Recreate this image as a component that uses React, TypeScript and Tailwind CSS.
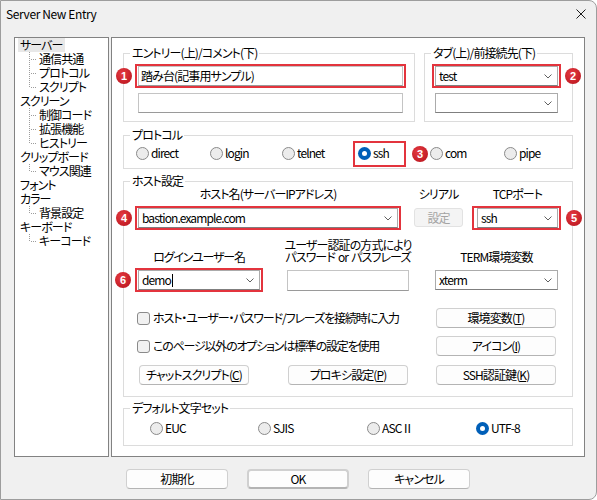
import React from "react";

type TreeNode = { label: string; selected?: boolean; children: string[] };

const tree: TreeNode[] = [
  { label: "サーバー", selected: true, children: ["通信共通", "プロトコル", "スクリプト"] },
  { label: "スクリーン", children: ["制御コード", "拡張機能", "ヒストリー"] },
  { label: "クリップボード", children: ["マウス関連"] },
  { label: "フォント", children: [] },
  { label: "カラー", children: ["背景設定"] },
  { label: "キーボード", children: ["キーコード"] },
];

function Badge({ n, className }: { n: number; className: string }) {
  return (
    <span
      className={`absolute z-10 w-[16px] h-[16px] rounded-full bg-[radial-gradient(circle_at_40%_35%,#e53a41,#b5121b)] text-white text-[11px] leading-[16px] font-bold text-center tracking-normal font-['Liberation_Sans',sans-serif] ${className}`}
    >
      {n}
    </span>
  );
}

function Chevron() {
  return (
    <svg width="8" height="5" viewBox="0 0 8 5" className="absolute right-[5px] top-[7px]">
      <path d="M0.5 0.5 L4 4 L7.5 0.5" fill="none" stroke="#606060" strokeWidth="1" />
    </svg>
  );
}

function Combo({ value, className, caret }: { value?: string; className: string; caret?: boolean }) {
  return (
    <div
      className={`relative h-[20px] bg-white border border-[#ababab] border-b-[#7f7f7f] pl-[3px] flex items-center whitespace-nowrap ${className}`}
    >
      <span>{value}</span>
      {caret && <span className="ml-[1px] w-[1px] h-[13px] bg-black" />}
      <Chevron />
    </div>
  );
}

function TextBox({ value, className }: { value?: string; className: string }) {
  return (
    <div className={`h-[20px] bg-white border border-[#c4c4c4] border-b-[#9a9a9a] pl-[2px] flex items-center whitespace-nowrap ${className}`}>
      <span>{value}</span>
    </div>
  );
}

function Radio({ label, checked }: { label: string; checked?: boolean }) {
  return (
    <div className="flex items-center gap-[2px] whitespace-nowrap">
      {checked ? (
        <span className="w-[13px] h-[13px] rounded-full bg-[#005fb8] flex items-center justify-center">
          <span className="w-[5px] h-[5px] rounded-full bg-white" />
        </span>
      ) : (
        <span className="w-[13px] h-[13px] rounded-full border border-[#8a8a8a] bg-[#ececec]" />
      )}
      <span>{label}</span>
    </div>
  );
}

function Check() {
  return <span className="w-[13px] h-[13px] rounded-[3px] border border-[#8a8a8a] bg-[#f1f1f1] shrink-0" />;
}

function Btn({ children, className }: { children: React.ReactNode; className: string }) {
  return (
    <div
      className={`h-[20px] flex items-center justify-center whitespace-nowrap rounded-[4px] bg-[#fdfdfd] border border-[#d0d0d0] border-b-[#b4b4b4] ${className}`}
    >
      {children}
    </div>
  );
}

function Group({ title, className, children }: { title: string; className: string; children: React.ReactNode }) {
  return (
    <fieldset className={`border border-[#dcdcdc] ${className}`}>
      <legend className="ml-[6px] px-[2px] leading-[14px] whitespace-nowrap">{title}</legend>
      {children}
    </fieldset>
  );
}

function TreeLink({ last }: { last: boolean }) {
  return (
    <svg width="24" height="14" className="shrink-0">
      <line x1="14.5" y1="0" x2="14.5" y2={last ? 7.5 : 14} stroke="#9c9c9c" strokeDasharray="1 1" />
      <line x1="16" y1="7.5" x2="22" y2="7.5" stroke="#9c9c9c" strokeDasharray="1 1" />
    </svg>
  );
}

export default function App() {
  return (
    <div className="w-[597px] h-[500px] overflow-hidden bg-[#f0f0f0] border border-[#9d9d9d] rounded-r-[8px] text-[12px] leading-[14px] text-black tracking-[-0.9px] font-['Noto_Sans_CJK_JP',sans-serif] [font-feature-settings:'palt']">
      {/* title bar */}
      <div className="h-[26px] flex items-center justify-between pl-[5px] pr-[10px] tracking-[-0.4px]">
        <span>Server New Entry</span>
        <svg width="10" height="10" viewBox="0 0 10 10">
          <path d="M0.5 0.5 L9.5 9.5 M9.5 0.5 L0.5 9.5" stroke="#1b1b1b" strokeWidth="1" />
        </svg>
      </div>

      <div className="pt-[10px] pl-[13px] flex flex-col">
        <div className="flex">
          {/* settings tree */}
          <div className="w-[95px] h-[420px] bg-white border border-[#828282] whitespace-nowrap">
            {tree.map((node) => (
              <div key={node.label}>
                <div className="h-[14px] flex items-center pl-[3px]">
                  <span className={`px-[2px] ${node.selected ? "bg-[#e8e8e8]" : ""}`}>{node.label}</span>
                </div>
                {node.children.map((c, i) => (
                  <div key={c} className="h-[14px] flex items-center">
                    <TreeLink last={i === node.children.length - 1} />
                    <span>{c}</span>
                  </div>
                ))}
              </div>
            ))}
          </div>

          {/* page */}
          <div className="ml-[2px] w-[474px] h-[420px] bg-white border border-[#828282] pt-[8px] px-[11px]">
            <div className="flex gap-[9px]">
              <Group title="エントリー(上)/コメント(下)" className="w-[292px]">
                <div className="pl-[14px] pt-[6px] pb-[8px]">
                  <div className="relative w-[265px]">
                    <TextBox value="踏み台(記事用サンプル)" className="w-[265px]" />
                    <div className="absolute -left-[3px] -right-[3px] -top-[2px] -bottom-[2px] border-2 border-[#e3343d]" />
                    <Badge n={1} className="-left-[22px] top-[2px]" />
                  </div>
                  <TextBox className="mt-[7px] w-[265px]" />
                </div>
              </Group>
              <Group title="タブ(上)/前接続先(下)" className="w-[149px]">
                <div className="pl-[10px] pt-[6px] pb-[8px]">
                  <div className="relative w-[123px]">
                    <Combo value="test" className="w-[123px]" />
                    <div className="absolute -left-[3px] -right-[3px] -top-[2px] -bottom-[2px] border-2 border-[#e3343d]" />
                    <Badge n={2} className="left-[130px] top-[2px]" />
                  </div>
                  <Combo className="mt-[7px] w-[123px]" />
                </div>
              </Group>
            </div>

            <Group title="プロトコル" className="mt-[6px]">
              <div className="pl-[12px] pt-[3px] pb-[7px]">
                <div className="flex h-[16px] items-center">
                  <div className="w-[74px]"><Radio label="direct" /></div>
                  <div className="w-[72px]"><Radio label="login" /></div>
                  <div className="w-[76px]"><Radio label="telnet" /></div>
                  <div className="relative w-[72px]">
                    <Radio label="ssh" checked />
                    <div className="absolute -left-[5px] -top-[5px] w-[53px] h-[26px] border-2 border-[#e3343d]" />
                    <Badge n={3} className="left-[54px] top-0" />
                  </div>
                  <div className="w-[74px]"><Radio label="com" /></div>
                  <div><Radio label="pipe" /></div>
                </div>
              </div>
            </Group>

            <Group title="ホスト設定" className="mt-[5px]">
              <div className="pl-[14px] pb-[11px]">
                <div className="flex h-[12px] leading-[12px] whitespace-nowrap">
                  <div className="w-[260px] flex justify-center">ホスト名(サーバーIPアドレス)</div>
                  <div className="ml-[16px] w-[49px] flex justify-center">シリアル</div>
                  <div className="ml-[14px] w-[81px] flex justify-center">TCPポート</div>
                </div>
                <div className="mt-[8px] flex items-start">
                  <div className="relative w-[260px]">
                    <Combo value="bastion.example.com" className="w-[260px]" />
                    <div className="absolute -left-[3px] -right-[3px] -top-[2px] -bottom-[2px] border-2 border-[#e3343d]" />
                    <Badge n={4} className="-left-[22px] top-[2px]" />
                  </div>
                  <div className="ml-[16px] w-[49px] h-[19px] flex items-center justify-center bg-[#f4f4f4] border border-[#e2e2e2] rounded-[3px] text-[#a3a3a3]">
                    設定
                  </div>
                  <div className="relative ml-[14px] w-[81px]">
                    <Combo value="ssh" className="w-[81px]" />
                    <div className="absolute -left-[5px] -right-[3px] -top-[2px] -bottom-[2px] border-2 border-[#e3343d]" />
                    <Badge n={5} className="left-[89px] top-[2px]" />
                  </div>
                </div>

                <div className="mt-[11px] h-[24px] flex items-end leading-[12px] whitespace-nowrap">
                  <div className="w-[122px] flex justify-center tracking-[-1.2px]">ログインユーザー名</div>
                  <div className="ml-[27px] w-[122px] flex flex-col items-center">
                    <span>ユーザー認証の方式により</span>
                    <span>
                      パスワード<span className="mx-[3px]">or</span>パスフレーズ
                    </span>
                  </div>
                  <div className="ml-[26px] w-[123px] flex justify-center">TERM環境変数</div>
                </div>
                <div className="mt-[7px] flex items-start">
                  <div className="relative w-[122px]">
                    <Combo value="demo" caret className="w-[122px]" />
                    <div className="absolute -left-[3px] -right-[3px] -top-[2px] -bottom-[2px] border-2 border-[#e3343d]" />
                    <Badge n={6} className="-left-[23px] top-[2px]" />
                  </div>
                  <TextBox className="ml-[27px] w-[122px] h-[21px]" />
                  <Combo value="xterm" className="ml-[26px] w-[123px]" />
                </div>

                <div className="mt-[17px] flex items-center">
                  <div className="-ml-[1px] w-[299px] flex items-center gap-[3px] whitespace-nowrap">
                    <Check />
                    <span className="tracking-[-1.1px]">ホスト・ユーザー・パスワード/フレーズを接続時に入力</span>
                  </div>
                  <Btn className="w-[120px]">
                    環境変数(<u>T</u>)
                  </Btn>
                </div>
                <div className="mt-[8px] flex items-center">
                  <div className="-ml-[1px] w-[299px] flex items-center gap-[3px] whitespace-nowrap">
                    <Check />
                    <span className="tracking-[-1.2px]">このページ以外のオプションは標準の設定を使用</span>
                  </div>
                  <Btn className="w-[120px]">
                    アイコン(<u>I</u>)
                  </Btn>
                </div>
                <div className="mt-[9px] flex items-center">
                  <Btn className="ml-[1px] w-[110px]">
                    チャットスクリプト(<u>C</u>)
                  </Btn>
                  <Btn className="ml-[39px] w-[120px]">
                    プロキシ設定(<u>P</u>)
                  </Btn>
                  <Btn className="ml-[28px] w-[120px]">
                    SSH認証鍵(<u>K</u>)
                  </Btn>
                </div>
              </div>
            </Group>

            <Group title="デフォルト文字セット" className="mt-[4px]">
              <div className="pl-[26px] pt-[5px] pb-[9px]">
                <div className="flex h-[16px] items-center">
                  <div className="w-[108px]"><Radio label="EUC" /></div>
                  <div className="w-[109px]"><Radio label="SJIS" /></div>
                  <div className="w-[109px]"><Radio label="ASCⅡ" /></div>
                  <div><Radio label="UTF-8" checked /></div>
                </div>
              </div>
            </Group>
          </div>
        </div>

        {/* dialog buttons */}
        <div className="mt-[12px] ml-[112px] flex gap-[19px]">
          <Btn className="w-[102px]">初期化</Btn>
          <Btn className="w-[102px] border-2 border-[#0067c0] border-b-[#0067c0]">OK</Btn>
          <Btn className="w-[102px]">キャンセル</Btn>
        </div>
      </div>
    </div>
  );
}
